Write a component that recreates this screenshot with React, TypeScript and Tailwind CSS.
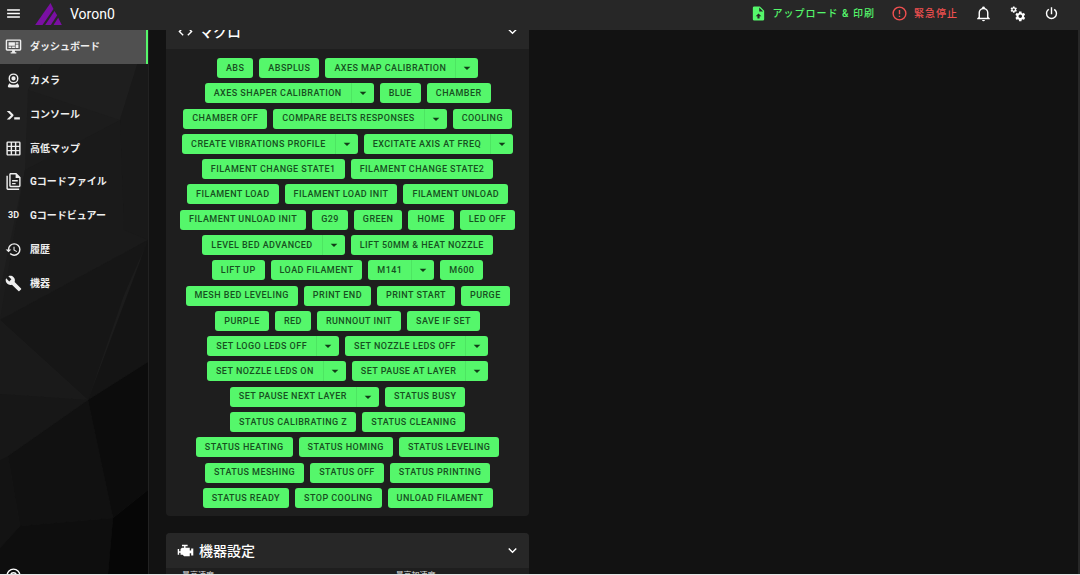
import type { ReactNode } from "react";
import clsx from "clsx";

const icons = {
  menu: "M3,6H21V8H3V6M3,11H21V13H3V11M3,16H21V18H3V16Z",
  dashboard:
    "M21,16V4H3V16H21M21,2A2,2 0 0,1 23,4V16A2,2 0 0,1 21,18H14V20H16V22H8V20H10V18H3C1.89,18 1,17.1 1,16V4C1,2.89 1.89,2 3,2H21M5,6H14V11H5V6M15,6H19V8H15V6M19,9V14H15V9H19M5,12H9V14H5V12M10,12H14V14H10V12Z",
  webcam:
    "M12,2A7,7 0 0,1 19,9A7,7 0 0,1 12,16A7,7 0 0,1 5,9A7,7 0 0,1 12,2M12,4A5,5 0 0,0 7,9A5,5 0 0,0 12,14A5,5 0 0,0 17,9A5,5 0 0,0 12,4M12,6A3,3 0 0,1 15,9A3,3 0 0,1 12,12A3,3 0 0,1 9,9A3,3 0 0,1 12,6M6,22A2,2 0 0,1 4,20C4,19.62 4.1,19.27 4.29,18.97L6.11,15.81C7.69,17.17 9.75,18 12,18C14.25,18 16.31,17.17 17.89,15.81L19.71,18.97C19.9,19.27 20,19.62 20,20A2,2 0 0,1 18,22H6Z",
  console:
    "M13,19V16H21V19H13M8.5,13L2.47,7H6.71L11.67,11.95C12.25,12.54 12.25,13.5 11.67,14.07L6.74,19H2.5L8.5,13Z",
  grid: "M10,4V8H14V4H10M16,4V8H20V4H16M16,10V14H20V10H16M16,16V20H20V16H16M14,20V16H10V20H14M8,20V16H4V20H8M8,14V10H4V14H8M8,8V4H4V8H8M10,14H14V10H10V14M4,2H20A2,2 0 0,1 22,4V20A2,2 0 0,1 20,22H4C2.92,22 2,21.1 2,20V4A2,2 0 0,1 4,2Z",
  files:
    "M16 0H8C6.9 0 6 .9 6 2V18C6 19.1 6.9 20 8 20H20C21.1 20 22 19.1 22 18V6L16 0M20 18H8V2H15V7H20V18M4 4V22H20V24H4C2.9 24 2 23.1 2 22V4H4M10 10V12H18V10H10M10 14V16H15V14H10Z",
  history:
    "M13.5,8H12V13L16.28,15.54L17,14.33L13.5,12.25V8M13,3A9,9 0 0,0 4,12H1L4.96,16.03L9,12H6A7,7 0 0,1 13,5A7,7 0 0,1 20,12A7,7 0 0,1 13,19C11.07,19 9.32,18.21 8.06,16.94L6.64,18.36C8.27,20 10.5,21 13,21A9,9 0 0,0 22,12A9,9 0 0,0 13,3",
  wrench:
    "M22.7,19L13.6,9.9C14.5,7.6 14,4.9 12.1,3C10.1,1 7.1,0.6 4.7,1.7L9,6L6,9L1.6,4.7C0.4,7.1 0.9,10.1 2.9,12.1C4.8,14 7.5,14.5 9.8,13.6L18.9,22.7C19.3,23.1 19.9,23.1 20.3,22.7L22.6,20.4C23.1,20 23.1,19.3 22.7,19Z",
  upload:
    "M14,2H6A2,2 0 0,0 4,4V20A2,2 0 0,0 6,22H18A2,2 0 0,0 20,20V8L14,2M13.5,16V19H10.5V16H8L12,12L16,16H13.5M13,9V3.5L18.5,9H13Z",
  alert:
    "M11,15H13V17H11V15M11,7H13V13H11V7M12,2C6.47,2 2,6.5 2,12A10,10 0 0,0 12,22A10,10 0 0,0 22,12A10,10 0 0,0 12,2M12,20A8,8 0 0,1 4,12A8,8 0 0,1 12,4A8,8 0 0,1 20,12A8,8 0 0,1 12,20Z",
  bell: "M10,21H14A2,2 0 0,1 12,23A2,2 0 0,1 10,21M21,19V20H3V19L5,17V11C5,7.9 7.03,5.17 10,4.29V4A2,2 0 0,1 12,2A2,2 0 0,1 14,4V4.29C16.97,5.17 19,7.9 19,11V17L21,19M17,11A5,5 0 0,0 12,6A5,5 0 0,0 7,11V18H17V11Z",
  cogs: "M15.9,18.45C17.25,18.45 18.35,17.35 18.35,16C18.35,14.65 17.25,13.55 15.9,13.55C14.54,13.55 13.45,14.65 13.45,16C13.45,17.35 14.54,18.45 15.9,18.45M21.1,16.68L22.58,17.84C22.71,17.95 22.75,18.13 22.66,18.29L21.26,20.71C21.17,20.86 21,20.92 20.83,20.86L19.09,20.16C18.73,20.44 18.33,20.67 17.91,20.85L17.64,22.7C17.62,22.87 17.47,23 17.3,23H14.5C14.32,23 14.18,22.87 14.15,22.7L13.89,20.85C13.46,20.67 13.07,20.44 12.71,20.16L10.96,20.86C10.81,20.92 10.62,20.86 10.54,20.71L9.14,18.29C9.05,18.13 9.09,17.95 9.22,17.84L10.7,16.68L10.65,16L10.7,15.31L9.22,14.16C9.09,14.05 9.05,13.86 9.14,13.71L10.54,11.29C10.62,11.13 10.81,11.07 10.96,11.13L12.71,11.84C13.07,11.56 13.46,11.32 13.89,11.15L14.15,9.29C14.18,9.13 14.32,9 14.5,9H17.3C17.47,9 17.62,9.13 17.64,9.29L17.91,11.15C18.33,11.32 18.73,11.56 19.09,11.84L20.83,11.13C21,11.07 21.17,11.13 21.26,11.29L22.66,13.71C22.75,13.86 22.71,14.05 22.58,14.16L21.1,15.31L21.15,16L21.1,16.68M6.69,8.07C7.56,8.07 8.26,7.37 8.26,6.5C8.26,5.63 7.56,4.92 6.69,4.92A1.58,1.58 0 0,0 5.11,6.5C5.11,7.37 5.82,8.07 6.69,8.07M10.03,6.94L11,7.68C11.07,7.75 11.09,7.87 11.03,7.97L10.13,9.53C10.08,9.63 9.96,9.67 9.86,9.63L8.74,9.18L8,9.62L7.81,10.81C7.79,10.92 7.7,11 7.59,11H5.79C5.67,11 5.58,10.92 5.56,10.81L5.4,9.62L4.64,9.18L3.52,9.63C3.41,9.67 3.3,9.63 3.24,9.53L2.34,7.97C2.28,7.87 2.31,7.75 2.39,7.68L3.34,6.94L3.31,6.5L3.34,6.06L2.39,5.32C2.31,5.25 2.28,5.13 2.34,5.03L3.24,3.47C3.3,3.37 3.41,3.33 3.52,3.37L4.63,3.82L5.4,3.38L5.56,2.19C5.58,2.08 5.67,2 5.79,2H7.59C7.7,2 7.79,2.08 7.81,2.19L8,3.38L8.74,3.82L9.86,3.37C9.96,3.33 10.08,3.37 10.13,3.47L11.03,5.03C11.09,5.13 11.07,5.25 11,5.32L10.03,6.06L10.06,6.5L10.03,6.94Z",
  power:
    "M16.56,5.44L15.11,6.89C16.84,7.94 18,9.83 18,12A6,6 0 0,1 12,18A6,6 0 0,1 6,12C6,9.83 7.16,7.94 8.88,6.88L7.44,5.44C5.36,6.88 4,9.28 4,12A8,8 0 0,0 12,20A8,8 0 0,0 20,12C20,9.28 18.64,6.88 16.56,5.44M13,3H11V13H13",
  code: "M14.6,16.6L19.2,12L14.6,7.4L16,6L22,12L16,18L14.6,16.6M9.4,16.6L4.8,12L9.4,7.4L8,6L2,12L8,18L9.4,16.6Z",
  chevron: "M7.41,8.58L12,13.17L16.59,8.58L18,10L12,16L6,10L7.41,8.58Z",
  caret: "M7,10L12,15L17,10H7Z",
  engine:
    "M7,4V6H10V8H7L5,10V13H3V10H1V18H3V15H5V18H8L10,20H18V16H20V19H23V9H20V12H18V8H12V6H15V4H7Z",
};

type IconName = keyof typeof icons;

function Icon({ name, className = "size-[17px]" }: { name: IconName; className?: string }) {
  return (
    <svg viewBox="0 0 24 24" fill="currentColor" aria-hidden="true" className={clsx("shrink-0", className)}>
      <path d={icons[name]} />
    </svg>
  );
}

const navItems: { label: string; icon?: IconName }[] = [
  { label: "ダッシュボード", icon: "dashboard" },
  { label: "カメラ", icon: "webcam" },
  { label: "コンソール", icon: "console" },
  { label: "高低マップ", icon: "grid" },
  { label: "Gコードファイル", icon: "files" },
  { label: "Gコードビュアー" },
  { label: "履歴", icon: "history" },
  { label: "機器", icon: "wrench" },
];

const macros: { name: string; params?: boolean }[] = [
  { name: "ABS" },
  { name: "ABSPLUS" },
  { name: "AXES MAP CALIBRATION", params: true },
  { name: "AXES SHAPER CALIBRATION", params: true },
  { name: "BLUE" },
  { name: "CHAMBER" },
  { name: "CHAMBER OFF" },
  { name: "COMPARE BELTS RESPONSES", params: true },
  { name: "COOLING" },
  { name: "CREATE VIBRATIONS PROFILE", params: true },
  { name: "EXCITATE AXIS AT FREQ", params: true },
  { name: "FILAMENT CHANGE STATE1" },
  { name: "FILAMENT CHANGE STATE2" },
  { name: "FILAMENT LOAD" },
  { name: "FILAMENT LOAD INIT" },
  { name: "FILAMENT UNLOAD" },
  { name: "FILAMENT UNLOAD INIT" },
  { name: "G29" },
  { name: "GREEN" },
  { name: "HOME" },
  { name: "LED OFF" },
  { name: "LEVEL BED ADVANCED", params: true },
  { name: "LIFT 50MM & HEAT NOZZLE" },
  { name: "LIFT UP" },
  { name: "LOAD FILAMENT" },
  { name: "M141", params: true },
  { name: "M600" },
  { name: "MESH BED LEVELING" },
  { name: "PRINT END" },
  { name: "PRINT START" },
  { name: "PURGE" },
  { name: "PURPLE" },
  { name: "RED" },
  { name: "RUNNOUT INIT" },
  { name: "SAVE IF SET" },
  { name: "SET LOGO LEDS OFF", params: true },
  { name: "SET NOZZLE LEDS OFF", params: true },
  { name: "SET NOZZLE LEDS ON", params: true },
  { name: "SET PAUSE AT LAYER", params: true },
  { name: "SET PAUSE NEXT LAYER", params: true },
  { name: "STATUS BUSY" },
  { name: "STATUS CALIBRATING Z" },
  { name: "STATUS CLEANING" },
  { name: "STATUS HEATING" },
  { name: "STATUS HOMING" },
  { name: "STATUS LEVELING" },
  { name: "STATUS MESHING" },
  { name: "STATUS OFF" },
  { name: "STATUS PRINTING" },
  { name: "STATUS READY" },
  { name: "STOP COOLING" },
  { name: "UNLOAD FILAMENT" },
];

function Logo() {
  return (
    <svg viewBox="0 0 80 66" fill="#7a0fa3" aria-hidden="true" className="h-[22px] w-[27px]">
      <path d="M0 66L46 0L55 18L22 66Z" />
      <path d="M30 66L58 24L66 37L47 66Z" />
      <path d="M55 66L69 44L80 66Z" />
    </svg>
  );
}

function TopBar() {
  return (
    <header className="flex h-[30px] shrink-0 items-center bg-[#272727] pr-3 pb-[3px]">
      <button aria-label="メニュー" className="flex w-[27px] justify-center">
        <Icon name="menu" />
      </button>
      <div className="flex flex-1 items-center gap-2 pl-2">
        <Logo />
        <h1 className="text-sm">Voron0</h1>
      </div>
      <button className="flex items-center gap-1.5 px-2 text-[10px] font-medium tracking-widest text-[#55f76b]">
        <Icon name="upload" />
        アップロード &amp; 印刷
      </button>
      <button className="flex items-center gap-1.5 px-2 text-[10px] font-medium tracking-widest text-[#f05050]">
        <Icon name="alert" />
        緊急停止
      </button>
      <button aria-label="通知" className="flex w-[34px] justify-center">
        <Icon name="bell" />
      </button>
      <button aria-label="設定" className="flex w-[34px] justify-center">
        <Icon name="cogs" />
      </button>
      <button aria-label="電源" className="flex w-[34px] justify-center">
        <Icon name="power" />
      </button>
    </header>
  );
}

// Low-poly backdrop behind the navigation
function SidebarBackdrop() {
  return (
    <svg
      viewBox="0 0 148 544"
      preserveAspectRatio="none"
      aria-hidden="true"
      className="absolute inset-0 size-full"
    >
      <path fill="#1c1c1c" d="M0 0H148V544H0Z" />
      <path fill="#202020" d="M0 0H60L28 60L25 140L0 260Z" />
      <path fill="#1e1e1e" d="M60 0H148L120 90L28 60Z" />
      <path fill="#191919" d="M148 0V240L124 200L120 90Z" />
      <path fill="#1a1a1a" d="M25 140L120 90L124 200L148 210L0 290Z" />
      <path fill="#161616" d="M0 290L148 210L124 265L88 370Z" />
      <path fill="#141414" d="M148 210V332L88 370Z" />
      <path fill="#1a1a1a" d="M0 290L88 370L0 364Z" />
      <path fill="#171717" d="M0 364L88 370L8 426L0 430Z" />
      <path fill="#111111" d="M88 370L113 488L20 496L8 426Z" />
      <path fill="#0c0c0c" d="M148 332V460L113 488L88 370Z" />
      <path fill="#131313" d="M0 430L8 426L20 496L0 518Z" />
      <path fill="#0e0e0e" d="M20 496L113 488L108 544H0V518Z" />
      <path fill="#060606" d="M148 460V544H108L113 488Z" />
    </svg>
  );
}

function Sidebar() {
  return (
    <aside className="relative flex w-[149px] shrink-0 flex-col justify-between overflow-hidden border-r border-[#222222]">
      <SidebarBackdrop />
      <nav className="relative -mr-px grid min-h-[270px] auto-rows-fr">
        {navItems.map((item, i) => (
          <a
            key={item.label}
            href="#"
            className={clsx(
              "flex items-center gap-2 border-r-3 pl-[5px] text-[10px] font-bold text-[#eeeeee]",
              i === 0 ? "border-[#55f76b] bg-[#505050]" : "border-transparent"
            )}
          >
            {item.icon ? (
              <Icon name={item.icon} />
            ) : (
              <span className="w-[17px] text-center text-[9px]">3D</span>
            )}
            {item.label}
          </a>
        ))}
      </nav>
      <a href="#" aria-label="情報" className="relative -mb-2.5 pl-[5px]">
        <svg viewBox="0 0 24 24" fill="none" stroke="currentColor" strokeWidth="2" className="size-[17px]">
          <circle cx="12" cy="12" r="9" />
          <circle cx="12" cy="12" r="4" />
        </svg>
      </a>
    </aside>
  );
}

function Panel({ title, icon, children }: { title: string; icon: IconName; children: ReactNode }) {
  return (
    <section className="overflow-hidden rounded-sm bg-[#1e1e1e]">
      <div className="flex h-[35px] items-center gap-[5px] bg-[#272727] px-[11px]">
        <Icon name={icon} />
        <h2 className="flex-1 text-sm font-medium">{title}</h2>
        <button aria-label={title + "を折りたたむ"} className="-mr-[3px]">
          <Icon name="chevron" />
        </button>
      </div>
      {children}
    </section>
  );
}

function MacroButton({ name, params }: { name: string; params?: boolean }) {
  return (
    <div className="flex h-5 overflow-hidden rounded-[3px] bg-[#55f76b] text-[#17501f]">
      <button className="px-[9px] pt-px text-[9px] font-medium tracking-wider">{name}</button>
      {params && (
        <button aria-label={name + " パラメータ"} className="flex w-[23px] items-center justify-center border-l border-[#4de562]">
          <Icon name="caret" className="size-4 text-[#123d18]" />
        </button>
      )}
    </div>
  );
}

export default function App() {
  return (
    <div className="flex h-screen flex-col overflow-hidden border-b border-[#e5e5e5] bg-[#121212] font-['Roboto','Noto_Sans_CJK_JP',sans-serif] text-white">
      <TopBar />
      <div className="flex min-h-0 flex-1">
        <Sidebar />
        <main className="min-w-0 flex-1 overflow-hidden pr-1.5 pl-2">
          <div className="-mt-4 flex w-5/12 flex-col gap-[17px] px-[9px]">
            <Panel title="マクロ" icon="code">
              <div className="flex min-h-[467px] flex-wrap content-between justify-center gap-x-1.5 px-[13px] pt-[9px] pb-2">
                {macros.map((macro) => (
                  <MacroButton key={macro.name} {...macro} />
                ))}
              </div>
            </Panel>
            <Panel title="機器設定" icon="engine">
              <div className="grid grid-cols-2 gap-4 px-4 pt-0.5 pb-4 text-[8px] text-[#e0e0e0]">
                <label>
                  最高速度
                  <input defaultValue="200" className="block w-full border-b border-[#555555]" />
                </label>
                <label className="pl-10">
                  最高加速度
                  <input defaultValue="3000" className="block w-full border-b border-[#555555]" />
                </label>
              </div>
            </Panel>
          </div>
        </main>
        <div className="w-0.5 bg-[#272727]" />
      </div>
    </div>
  );
}
